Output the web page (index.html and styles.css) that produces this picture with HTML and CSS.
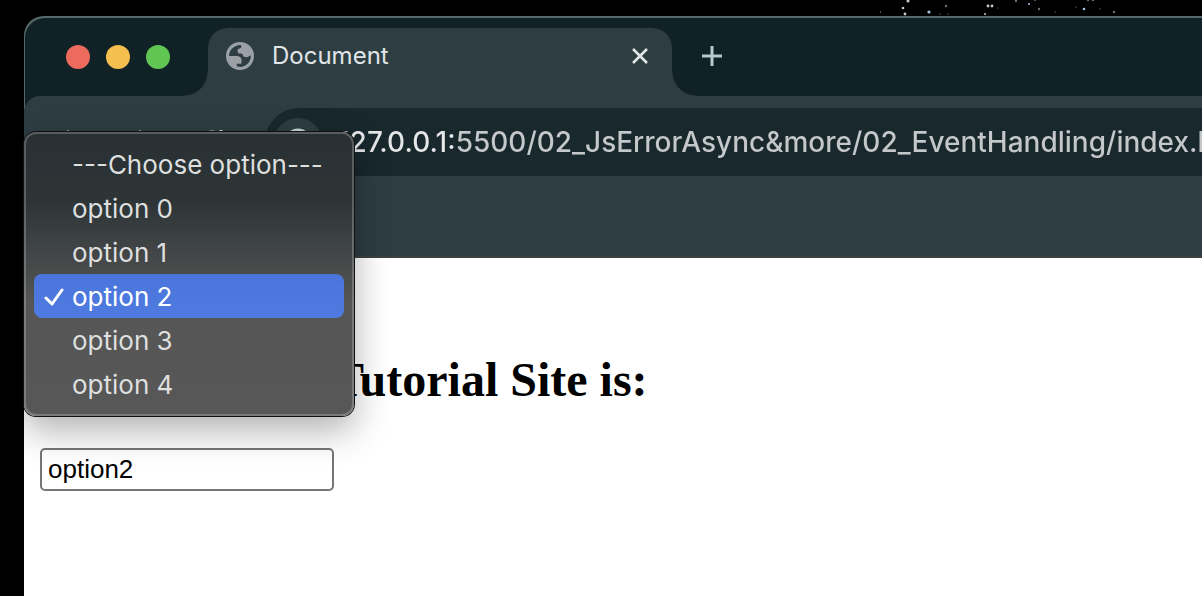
FILE: index.html
```html
<!DOCTYPE html>
<html lang="en">
<head>
<meta charset="utf-8">
<title>Document</title>
<link rel="stylesheet" href="styles.css">
</head>
<body>
<svg class="stars" width="260" height="16" viewBox="0 0 260 16" aria-hidden="true">
  <g fill="#c9c6cc">
    <circle cx="28" cy="1" r="1.5"/><circle cx="23" cy="8" r="1.3"/><circle cx="25" cy="14" r="1.4"/>
    <circle cx="108" cy="6" r="1.4"/><circle cx="112" cy="6" r="1.4"/><circle cx="105" cy="14" r="1"/>
  </g>
  <g fill="#a9c0dc"><circle cx="49" cy="12" r="1.6"/><circle cx="204" cy="9" r="1.3"/><circle cx="149" cy="4" r="1"/></g>
  <g fill="#6d6d72">
    <circle cx="0" cy="12" r="1"/><circle cx="66" cy="6" r="1.2"/><circle cx="136" cy="1" r="1.2"/>
    <circle cx="159" cy="9" r="1.2"/><circle cx="155" cy="0" r="1"/><circle cx="208" cy="0" r="1.2"/>
    <circle cx="213" cy="0" r="1.2"/><circle cx="234" cy="12" r="1.2"/>
  </g>
  <g fill="#2c2c30"><circle cx="60" cy="14" r="1"/><circle cx="68" cy="14" r="1"/><circle cx="118" cy="8" r="1"/><circle cx="175" cy="12" r="1"/><circle cx="196" cy="7" r="1"/><circle cx="220" cy="9" r="1"/></g>
</svg>
<div class="window">
  <header class="tab-strip">
    <div class="controls">
      <button class="control close" aria-label="Close window"></button>
      <button class="control minimize" aria-label="Minimize window"></button>
      <button class="control maximize" aria-label="Maximize window"></button>
    </div>
    <div class="tab">
      <svg class="globe" width="28" height="28" viewBox="2 2 20 20" aria-hidden="true">
        <circle cx="12" cy="12" r="10" fill="#9aa0a6"/>
        <path d="M4.2 12c0-4.300 3.500-7.700 8.200-7.800C13.600 5.400 13 6.500 11 6.800c-1 .2-.8 1.200-.6 1.900.2.800 0 1.500 1.700 1.500 1.500 0 1.800.3 2 1.300.3 1.500 2.600 1.700 4.400.7l1.200-.7C20 16.200 16.500 19.700 12.200 19.800c-1.100 0-2-.2-2.500-.4v-1.800h2.400c.7 0 1-.4 1-1v-1.900c0-1.700-1.700-2.700-3.700-2.700z" fill="#2d3d42"/>
      </svg>
      <span class="tab-title">Document</span>
      <button class="icon-button tab-close" aria-label="Close tab">
        <svg width="16" height="16" viewBox="0 0 16 16"><path d="M1 1l14 14M15 1L1 15" stroke="#e1e5e8" stroke-width="2.600"/></svg>
      </button>
    </div>
    <button class="icon-button new-tab" aria-label="New tab">
      <svg width="20" height="20" viewBox="0 0 20 20"><path d="M10 0v20M0 10h20" stroke="#b4c9d0" stroke-width="3"/></svg>
    </button>
  </header>
  <nav class="toolbar">
    <div class="navigation">
      <button class="icon-button" aria-label="Back"><svg width="24" height="24" viewBox="0 0 24 24"><path d="M13 1L2 12l11 11M2 12h21"/></svg></button>
      <button class="icon-button" aria-label="Forward"><svg width="24" height="24" viewBox="0 0 24 24"><path d="M11 1l11 11-11 11M22 12H1"/></svg></button>
      <button class="icon-button" aria-label="Reload"><svg width="24" height="24" viewBox="0 0 24 24"><path d="M20 6A10 10 0 1 0 22 12M21 0v8h-8"/></svg></button>
    </div>
    <div class="address">
      <button class="icon-button site-info" aria-label="Site information">
        <svg width="20" height="28" viewBox="0 0 20 28"><circle cx="10" cy="14" r="12"/><path d="M10 12v8M10 7v2"/></svg>
      </button>
      <input class="url" type="text" aria-label="Address" value="127.0.0.1:5500/02_JsErrorAsync&amp;more/02_EventHandling/index.html">
    </div>
  </nav>
  <main class="page">
    <h1 class="heading">Tutorial Site is:</h1>
    <input class="answer" type="text" aria-label="Selected option" value="option2">
  </main>
  <select class="menu" size="6" aria-label="Choose option">
    <option>---Choose option---</option>
    <option>option 0</option>
    <option>option 1</option>
    <option selected>option 2</option>
    <option>option 3</option>
    <option>option 4</option>
  </select>
</div>
</body>
</html>
```

FILE: styles.css
```css
* { box-sizing: border-box; }

body {
  margin: 0;
  padding: 16px 0 0 24px;
  min-height: 100vh;
  display: flex;
  background: #000;
  overflow: hidden;
  font-family: Inter, "Liberation Sans", sans-serif;
}

button { border: 0; padding: 0; background: none; }

.stars { position: absolute; top: 0; left: 880px; }

.window {
  position: relative;
  flex: 1;
  min-width: 0;
  display: flex;
  flex-direction: column;
  background: #112227;
  border-top-left-radius: 20px;
  box-shadow: inset 1px 2px 0 #56686b;
}

.tab-strip {
  display: flex;
  height: 80px;
  padding-top: 12px;
}

.controls {
  display: flex;
  gap: 16px;
  width: 184px;
  padding: 17px 0 0 42px;
}

.control { width: 24px; height: 24px; border-radius: 50%; }
.close { background: #ed6a5f; }
.minimize { background: #f5bf4f; }
.maximize { background: #61c554; }

.tab {
  position: relative;
  display: flex;
  align-items: center;
  width: 464px;
  padding: 0 22px 12px 18px;
  background: #2d3d42;
  border-radius: 20px 20px 0 0;
}

.tab::before,
.tab::after {
  content: "";
  position: absolute;
  bottom: 0;
  width: 24px;
  height: 24px;
}

.tab::before {
  right: 100%;
  background: radial-gradient(circle at 0 0, transparent 23px, #2d3d42 24px);
}

.tab::after {
  left: 100%;
  background: radial-gradient(circle at 100% 0, transparent 23px, #2d3d42 24px);
}

.tab-title {
  flex: 1;
  margin-left: 18px;
  padding-bottom: 2px;
  font-size: 24px;
  color: #e1e5e8;
}

.icon-button { display: flex; align-items: center; justify-content: center; }
.tab-close { width: 20px; height: 20px; }
.new-tab { width: 32px; height: 56px; margin-left: 24px; }

.toolbar {
  display: flex;
  align-items: flex-start;
  height: 162px;
  padding-top: 12px;
  background: #2d3d42;
  border-top-left-radius: 16px;
  border-bottom: 2px solid #3b4142;
}

.navigation {
  display: flex;
  align-items: center;
  gap: 48px;
  width: 241px;
  height: 68px;
  padding-left: 32px;
}

.navigation svg,
.site-info svg { fill: none; stroke: #c5d2d6; stroke-width: 3; overflow: visible; }

.address {
  flex: 1;
  min-width: 0;
  display: flex;
  align-items: center;
  gap: 16px;
  height: 68px;
  padding-left: 9px;
  background: #18282d;
  border-radius: 34px 0 0 34px;
}

.site-info {
  flex: none;
  width: 48px;
  height: 48px;
  border-radius: 50%;
  background: #2d3d42;
}

.url {
  flex: 1;
  min-width: 0;
  padding: 0;
  border: 0;
  font: 500 28px Inter, "Liberation Sans", sans-serif;
  color: #c5c8ca;
  background: linear-gradient(90deg, #e5e7e8 120px, #c5c8ca 120px) text;
  -webkit-text-fill-color: transparent;
}

.page {
  flex: 1;
  padding: 94px 16px 0;
  background: #fff;
}

.heading {
  margin: 0 0 40px;
  padding-left: 292px;
  font: bold 48px/56px "Liberation Serif", "Times New Roman", serif;
  color: #000;
}

.answer {
  display: block;
  width: 294px;
  height: 43px;
  padding: 0 6px;
  border: 2px solid #767676;
  border-radius: 5px;
  font: 26px "Liberation Sans", Arial, sans-serif;
  color: #000;
  background: #fff;
}

.menu {
  position: absolute;
  left: 0;
  top: 116px;
  width: 330px;
  height: 284px;
  padding: 8px;
  overflow: hidden;
  border: 2px solid #ffffff38;
  border-radius: 12px;
  outline: none;
  background: linear-gradient(#283033, #2d3537 25%, #454848 45%, #555655 60%, #575757) border-box;
  box-shadow: 0 0 0 1px #111, 0 14px 36px #00000050;
  font: 26px Inter, "Liberation Sans", sans-serif;
}

.menu option {
  height: 44px;
  min-height: 44px;
  padding: 7px 0 0 38px;
  border-radius: 8px;
  color: #dedfdf;
}

.menu option:checked {
  color: #fff;
  background: url("data:image/svg+xml,%3Csvg xmlns='http://www.w3.org/2000/svg' width='20' height='20'%3E%3Cpath d='M2 11l6 6L18 3' fill='none' stroke='white' stroke-width='3' stroke-linecap='round' stroke-linejoin='round'/%3E%3C/svg%3E") 10px 13px no-repeat, linear-gradient(#4a75dc, #4f7be0);
}
```
